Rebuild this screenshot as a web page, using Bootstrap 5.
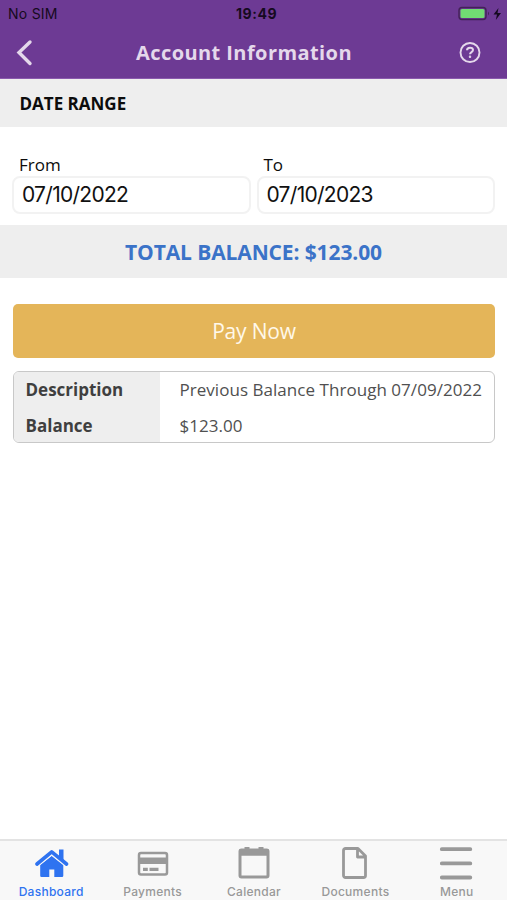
<!DOCTYPE html>
<html lang="en">
<head>
<meta charset="utf-8">
<meta name="viewport" content="width=device-width, initial-scale=1">
<title>Account Information</title>
<link href="https://cdn.jsdelivr.net/npm/bootstrap@5.3.0/dist/css/bootstrap.min.css" rel="stylesheet">
<style>
body{font-family:"Open Sans","Noto Sans",sans-serif;color:#0c0c0c}
.ui-font{font-family:Inter,"Liberation Sans",sans-serif}
.app-head{background:#6d3a94;height:79px;border-bottom:1px solid #8a5aad}
.status{height:27px;font-size:14px;line-height:27px;color:#160a20;padding:0 5px 0 8px}
.status-side{flex:1 1 0}
.carrier{letter-spacing:.25px}
.clock{letter-spacing:.55px;padding-left:3px}
.title-bar{height:51px;padding:0 26px 0 16px;color:#e4d8eb}
.title-bar h1{font-size:20px;font-weight:700;line-height:51px;letter-spacing:.42px;margin-right:9px}
.title-side{width:60px}
.section-name{height:48px;background:#eee;padding-left:19.500px;font-size:17px;line-height:50px;font-weight:700}
.dates{height:98px;padding:25px 12px 0;column-gap:6px}
.dates label{font-size:17px;line-height:26px;padding-left:7px;height:24px}
.dates .form-control{height:38px;border:2px solid #f2f2f2;border-radius:8px;padding:0 8px 2px;font-size:21px;line-height:32px;letter-spacing:-.72px;color:#111}
.total{height:53px;background:#eee;color:#3b73c8;font-size:21px;font-weight:700;line-height:54px;letter-spacing:-.12px}
.pay{height:54px;margin:26px 12px 0 13px;background:#e4b559;border:0;border-radius:5px;color:#fff8e9;font-size:21px;line-height:55px;letter-spacing:-.2px;padding:0}
.detail{margin:13px 12px 0 13px;height:72px;border:1.5px solid #c8c8c8;border-radius:6px;font-size:17px;line-height:35.500px;color:#505050}
.detail dt{width:146px;background:#eee;padding-left:11.500px;color:#3f3f3f;font-weight:700}
.detail dd{padding-left:19.500px;white-space:nowrap;letter-spacing:.04px}
.tabs{height:61px;background:#f8f8f8;border-top:2px solid #e3e3e3}
.tabs a{color:#999;font-size:12px;font-weight:500;line-height:16px;letter-spacing:.28px}
.tabs a.active{color:#2f73f0}
.tabs a span{padding-left:1px}
.tabs svg{width:36px;height:36px;margin-top:4px;margin-bottom:3px}
</style>
<script src="https://cdn.jsdelivr.net/npm/bootstrap@5.3.0/dist/js/bootstrap.bundle.min.js"></script>
</head>
<body class="d-flex flex-column vh-100 overflow-hidden bg-white">
<header class="app-head flex-shrink-0">
  <div class="status ui-font d-flex">
    <span class="status-side"><span class="carrier">No SIM</span></span>
    <span class="clock fw-bold">19:49</span>
    <span class="status-side d-flex justify-content-end align-items-center">
      <svg width="44" height="16" viewBox="0 0 44 16"><rect x="1" y="1.500" width="27" height="12" rx="3" fill="none" stroke="#432257" stroke-width="1.4"/><rect x="2.5" y="3" width="24" height="9" rx="1.5" fill="#71dc73"/><path d="M30 5.500q2 2 0 4z" fill="#432257"/><path d="M40.500 2 35.500 8.500H39L37.800 14 43 7H39.500z" fill="#160a20"/></svg>
    </span>
  </div>
  <div class="title-bar d-flex justify-content-between align-items-center">
    <span class="title-side"><svg class="d-block" width="18" height="28" viewBox="0 0 18 28" fill="none" stroke="#e4d8eb" stroke-width="3.400" stroke-linecap="round" stroke-linejoin="miter"><path d="M14 3 3 13.500 14 24.500"/></svg></span>
    <h1 class="mb-0">Account Information</h1>
    <span class="title-side text-end"><svg class="d-block ms-auto" width="22" height="22" viewBox="0 0 22 22" fill="none" stroke="#e4d8eb" stroke-width="1.900"><circle cx="11" cy="10.500" r="9.500"/><path d="M8 8.300C8 6.500 9.300 5.700 11 5.700s3 .8 3 2.400c0 2-3 2-3 4.100" stroke-width="2"/><circle cx="11" cy="14.800" r=".5" stroke-width="1.500"/></svg></span>
  </div>
</header>
<main class="flex-grow-1">
  <h2 class="section-name mb-0"><span>DATE RANGE</span></h2>
  <div class="dates d-flex">
    <div class="flex-fill w-50"><label class="d-block" for="from">From</label><input id="from" class="form-control ui-font" value="07/10/2022"></div>
    <div class="flex-fill w-50"><label class="d-block" for="to">To</label><input id="to" class="form-control ui-font" value="07/10/2023"></div>
  </div>
  <div class="total text-center"><span>TOTAL BALANCE: $123.00</span></div>
  <div class="d-grid"><button class="btn pay" type="button"><span>Pay Now</span></button></div>
  <dl class="detail overflow-hidden mb-0">
    <div class="d-flex"><dt>Description</dt><dd class="mb-0">Previous Balance Through 07/09/2022</dd></div>
    <div class="d-flex"><dt>Balance</dt><dd class="mb-0">$123.00</dd></div>
  </dl>
</main>
<nav class="tabs ui-font nav nav-fill flex-nowrap flex-shrink-0">
  <a class="nav-item active text-decoration-none d-flex flex-column align-items-center w-100" href="#"><svg viewBox="0 0 36 36" fill="currentColor"><path d="M26 4.500h4.500v11L26 12z"/><path d="M7.200 19.800 18.700 10.800 30.300 19.800v11a1.300 1.300 0 0 1-1.300 1.300H21.300v-7.500h-5V32.100H8.500a1.300 1.300 0 0 1-1.300-1.300z"/><path d="M2.500 21.600 18.700 8.500 35 21.600" fill="none" stroke="#f8f8f8" stroke-width="3.600"/><path d="M4 19 18.700 6.800 33.500 19" fill="none" stroke="currentColor" stroke-width="3.600" stroke-linecap="round" stroke-linejoin="round"/></svg><span>Dashboard</span></a>
  <a class="nav-item text-decoration-none d-flex flex-column align-items-center w-100" href="#"><svg viewBox="0 0 36 36" fill="currentColor"><rect x="5" y="8" width="28" height="21.400" rx="2" fill="none" stroke="currentColor" stroke-width="2.500"/><path d="M5 12.500h28v6.500H5zM9 22.800h4.800v3.200H9zM15.500 22.800H24.500v3.200h-9z"/></svg><span>Payments</span></a>
  <a class="nav-item text-decoration-none d-flex flex-column align-items-center w-100" href="#"><svg viewBox="0 0 36 36" fill="currentColor"><rect x="4" y="5" width="28" height="27" rx="1.500" fill="none" stroke="currentColor" stroke-width="3"/><path d="M3 4.500h30v6.300H3zM8.500 2h5v3h-5zM22.500 2h5v3h-5z"/></svg><span>Calendar</span></a>
  <a class="nav-item text-decoration-none d-flex flex-column align-items-center w-100" href="#"><svg viewBox="0 0 36 36" fill="none" stroke="currentColor" stroke-width="2.800" stroke-linejoin="round"><path d="M8.500 3.500H21L28.500 11v19.500a2 2 0 0 1-2 2h-18a2 2 0 0 1-2-2v-25a2 2 0 0 1 2-2zM20.500 4v8h8"/></svg><span>Documents</span></a>
  <a class="nav-item text-decoration-none d-flex flex-column align-items-center w-100" href="#"><svg viewBox="0 0 36 36" stroke="currentColor" stroke-width="3.800" stroke-linecap="round"><path d="M3.800 4.200h28.500M3.800 18.400h28.500M3.800 32.500h28.500"/></svg><span>Menu</span></a>
</nav>
</body>
</html>
